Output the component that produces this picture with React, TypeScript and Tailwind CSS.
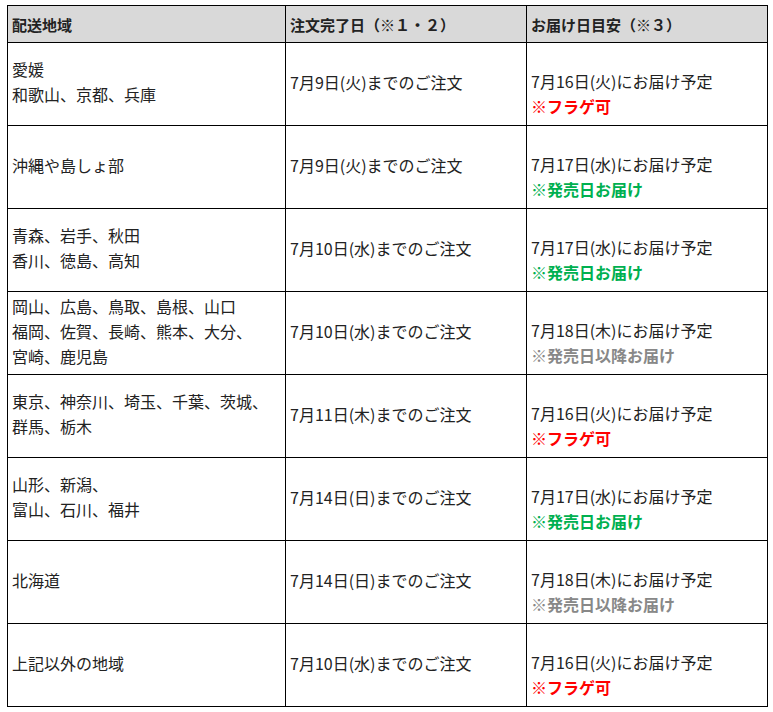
const rows: { area: string[]; order: string; date: string; note: string; tone: "red" | "green" | "gray" }[] = [
  { area: ["愛媛", "和歌山、京都、兵庫"], order: "7月9日(火)までのご注文", date: "7月16日(火)にお届け予定", note: "※フラゲ可", tone: "red" },
  { area: ["沖縄や島しょ部"], order: "7月9日(火)までのご注文", date: "7月17日(水)にお届け予定", note: "※発売日お届け", tone: "green" },
  { area: ["青森、岩手、秋田", "香川、徳島、高知"], order: "7月10日(水)までのご注文", date: "7月17日(水)にお届け予定", note: "※発売日お届け", tone: "green" },
  { area: ["岡山、広島、鳥取、島根、山口", "福岡、佐賀、長崎、熊本、大分、", "宮崎、鹿児島"], order: "7月10日(水)までのご注文", date: "7月18日(木)にお届け予定", note: "※発売日以降お届け", tone: "gray" },
  { area: ["東京、神奈川、埼玉、千葉、茨城、", "群馬、栃木"], order: "7月11日(木)までのご注文", date: "7月16日(火)にお届け予定", note: "※フラゲ可", tone: "red" },
  { area: ["山形、新潟、", "富山、石川、福井"], order: "7月14日(日)までのご注文", date: "7月17日(水)にお届け予定", note: "※発売日お届け", tone: "green" },
  { area: ["北海道"], order: "7月14日(日)までのご注文", date: "7月18日(木)にお届け予定", note: "※発売日以降お届け", tone: "gray" },
  { area: ["上記以外の地域"], order: "7月10日(水)までのご注文", date: "7月16日(火)にお届け予定", note: "※フラゲ可", tone: "red" },
];

const toneClass = {
  red: "text-[#ff0000]",
  green: "text-[#00b050]",
  gray: "text-[#888888]",
};

export default function App() {
  return (
    <div
      className="pl-[7px] pt-[5px] bg-white text-[#222] text-[16px] leading-[25px]"
      style={{ fontFamily: '"Noto Sans CJK JP", "Noto Sans", sans-serif' }}
    >
      <table className="w-[760px] border-collapse table-fixed">
        <colgroup>
          <col className="w-[278px]" />
          <col className="w-[241px]" />
          <col className="w-[241px]" />
        </colgroup>
        <thead>
          <tr className="h-[37px] bg-[#d9d9d9] text-[15px]">
            <th className="border border-black px-[4px] text-left font-bold">配送地域</th>
            <th className="border border-black px-[4px] text-left font-bold">注文完了日（※１・２）</th>
            <th className="border border-black px-[4px] text-left font-bold">お届け日目安（※３）</th>
          </tr>
        </thead>
        <tbody>
          {rows.map((r, i) => (
            <tr key={i} className="h-[83px]">
              <td className="border border-black px-[4px] pb-[4px] align-middle">
                {r.area.map((a) => (
                  <div key={a}>{a}</div>
                ))}
              </td>
              <td className="border border-black px-[4px] pb-[4px] align-middle">{r.order}</td>
              <td className="border border-black px-[4px] pt-[19px] align-middle">
                <div>{r.date}</div>
                <div className={`font-bold ${toneClass[r.tone]}`}>{r.note}</div>
              </td>
            </tr>
          ))}
        </tbody>
      </table>
    </div>
  );
}
